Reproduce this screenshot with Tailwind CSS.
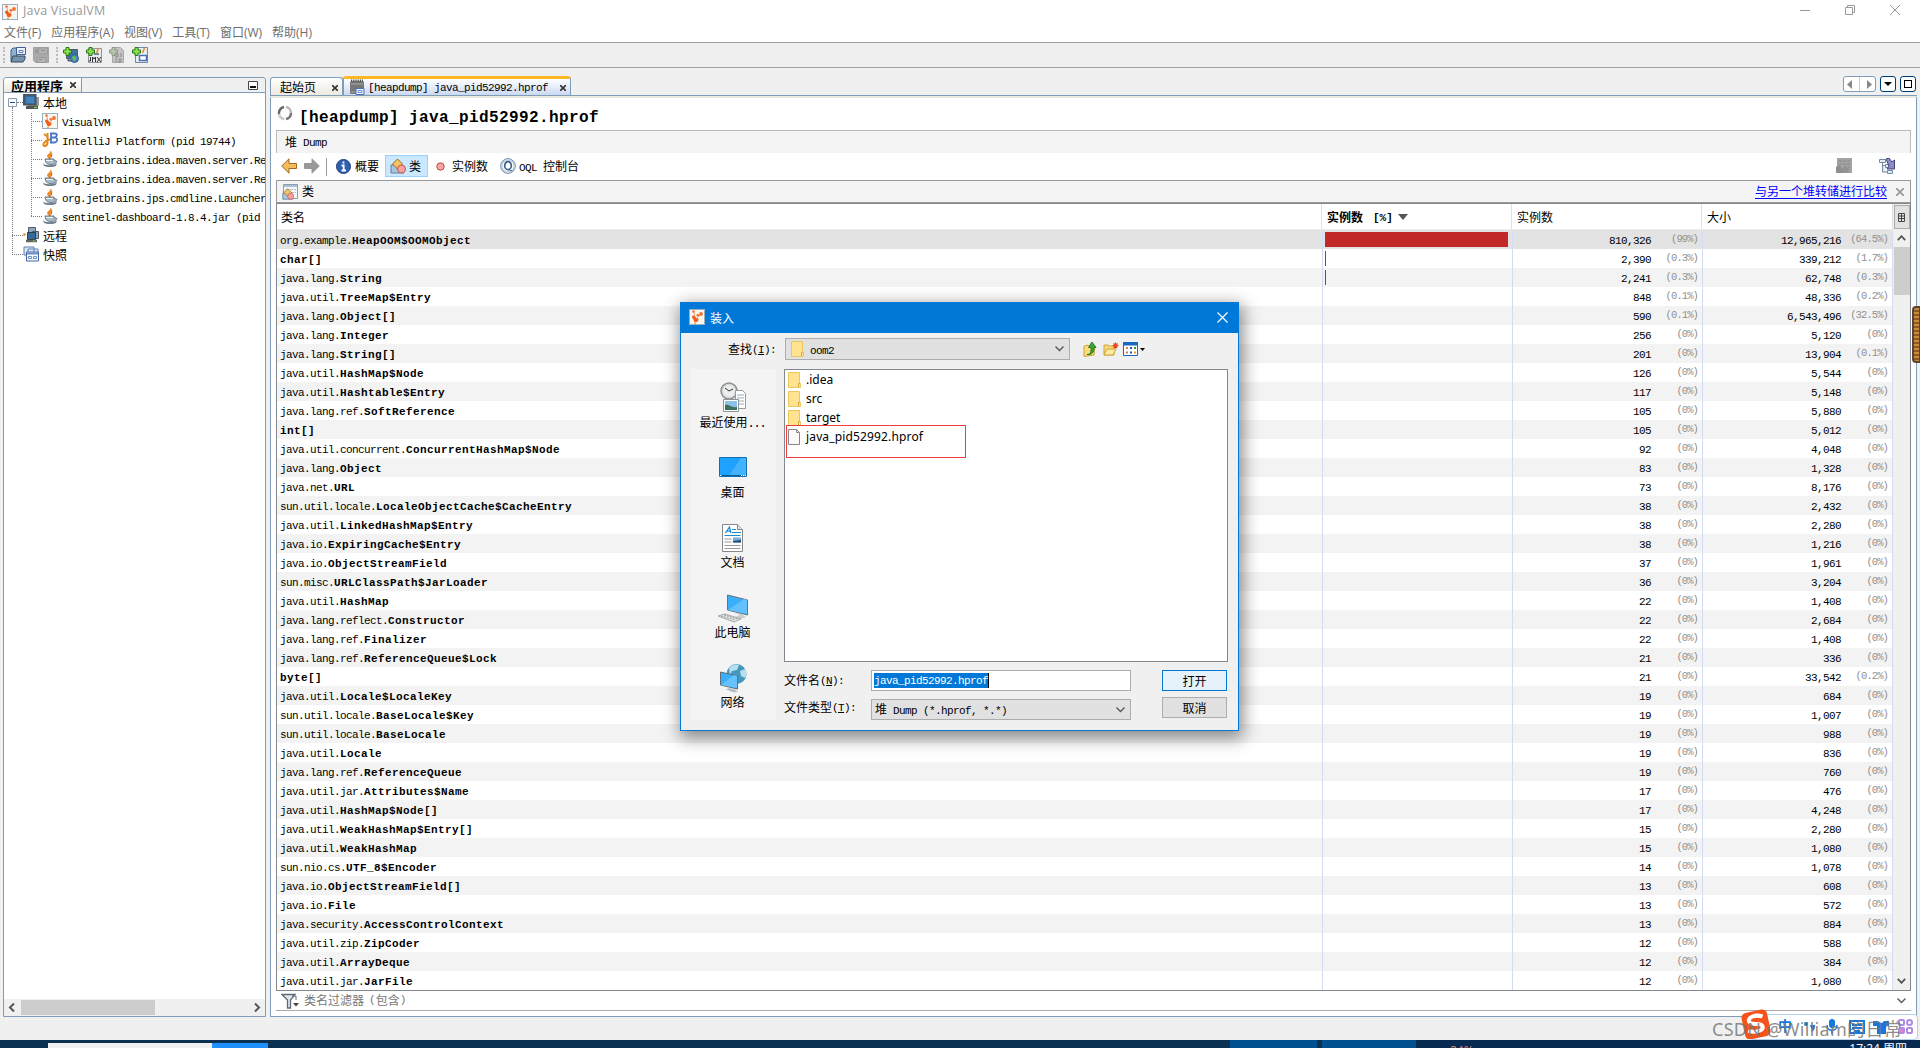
<!DOCTYPE html>
<html lang="zh-CN">
<head>
    <meta charset="UTF-8" />
    <title>Java VisualVM</title>
    <meta name="viewport" content="width=device-width, initial-scale=1" />
    <script src="https://cdn.jsdelivr.net/npm/@tailwindcss/browser@4"></script>
</head>
<body class="relative w-[1920px] h-[1048px] overflow-hidden bg-[#f0f0f0] flex flex-col text-black text-[12px] leading-none whitespace-nowrap font-['Liberation_Mono','Noto_Sans_CJK_SC',monospace]">

    <!-- shared icons -->
    <svg class="hidden">
        <symbol id="vm" viewBox="0 0 16 16">
            <rect x=".5" y=".5" width="15" height="15" fill="#f8f6f3" stroke="#9ab0c0"/>
            <path d="M5 3l.5 4M11 6L8 9" stroke="#f58a4a" stroke-width=".8"/>
            <circle cx="4.500" cy="2.500" r="1.300" fill="#f47a3a"/><circle cx="12" cy="5" r="1.900" fill="#f2702c"/><circle cx="8.800" cy="6.200" r="1.300" fill="#f2702c"/>
            <path d="M3.500 7c1-1 2.500 0 3.500 1.500s3 0 2.500 2.500c-.5 2.500-4 3-4.500 1-.3-2-1.200-2-1.700-3s-.3-1.500.2-2z" fill="#ee5f1c"/><circle cx="6" cy="14.300" r=".9" fill="#f58a4a"/>
        </symbol>
        <symbol id="java" viewBox="0 0 16 16">
            <path d="M8.500 0c1 2-3 3-3 5 0 1.500 1 2 2 3 0-2 3-3 2.500-5C9.800 1.800 9 1 8.500 0z" fill="#f08a24" stroke="#e07a1c" stroke-width=".6"/><path d="M7 8c2-1 3-2 2.500-4" stroke="#c8581c" fill="none"/>
            <path d="M1 12c1 3 12 3 14 0l-1 3c-3 1.500-9 1.500-12 0z" fill="#6e7f8c"/>
            <path d="M3 8h9v2c3-1 4 1 1 2.500-3 2-8 1-9-1z" fill="#a8bac6" stroke="#5d6f7c" stroke-width=".9"/><path d="M4 9.500h7" stroke="#eef3f6"/>
        </symbol>
        <symbol id="folder" viewBox="0 0 13 16">
            <path d="M.5.5h11v11h1v4H.5z" fill="#ffe391" stroke="#ecc759"/><path d="M10.500 15V11.500h1.500" fill="none" stroke="#d8ab33"/>
        </symbol>
        <symbol id="plus" viewBox="0 0 9 9"><path d="M3 .5h3V3h2.500v3H6v2.500H3V6H.5V3H3z" fill="#8be04c" stroke="#247a14"/></symbol>
        <symbol id="shapes" viewBox="0 0 16 16">
            <path d="M1 7h6l7 8H1z" fill="#a9c4de" stroke="#5f7f9d"/>
            <path d="M7.500 1l5 5-5 5-5-5z" fill="#f3c468" stroke="#9a6b1c"/>
            <circle cx="11.500" cy="11" r="4" fill="#f6a49c" stroke="#c25a52"/>
        </symbol>
    </svg>

    <!-- title bar -->
    <header class="h-[42px] bg-white flex justify-between shrink-0">
        <div class="font-['Open_Sans','Noto_Sans_CJK_SC',sans-serif]">
            <div class="flex items-center gap-[5px] pl-0.5 h-[23px] text-[#999]">
                <svg class="size-4"><use href="#vm"/></svg>
                <span class="text-[12.5px] tracking-[0.2px]">Java VisualVM</span>
            </div>
            <nav class="flex items-center gap-[10px] pl-1 h-5 text-[#6d6d6d]">
                <span>文件(F)</span><span>应用程序(A)</span><span>视图(V)</span><span>工具(T)</span><span>窗口(W)</span><span>帮助(H)</span>
            </nav>
        </div>
        <div class="flex gap-[35px] pr-[20px] pt-[5px]">
            <svg class="size-[10px]" fill="none" stroke="#999"><path d="M0 5.500h10"/></svg>
            <svg class="size-[10px]" fill="none" stroke="#999"><path d="M.5 2.500h7v7h-7zM2.500 2.500v-2h7v7h-2"/></svg>
            <svg class="size-[10px]" fill="none" stroke="#999"><path d="M0 0l10 10M10 0L0 10"/></svg>
        </div>
    </header>

    <!-- toolbar -->
    <div class="h-[26px] shrink-0 border-y border-[#a0a0a0] bg-[#efefef] flex items-center pl-[3px]">
        <div class="h-4 border-l-2 border-dotted border-[#bbb] mr-[5px]"></div>
        <svg class="size-4 mr-[7px]" viewBox="0 0 16 16"><path d="M1 3l2-2h4v13H1z" fill="#8fb1d2" stroke="#41607c"/><path d="M6.500.5h9v7h-9z" fill="#eaf2fb" stroke="#3e5f97"/><path d="M9 3.500h4v2H9z" fill="#fff" stroke="#5b7fc0"/><path d="M3 9h12v3l-2 3H1z" fill="#7593ad" stroke="#33485a"/></svg>
        <svg class="size-4 mr-[7px]" viewBox="0 0 16 16"><path d="M.5.5h15v15h-13l-2-2z" fill="#aaa" stroke="#a3a3a3"/><path d="M5.500 1h9v6h-9zM4 10.500h9v5H4z" fill="#b2b2b2" stroke="#999"/><path d="M2 3h3M2 5h3M8 3.500h4M6 12.500h3" stroke="#8c8c8c"/></svg>
        <div class="h-4 border-l-2 border-dotted border-[#bbb] mr-[5px]"></div>
        <svg class="size-4 mr-[7px]" viewBox="0 0 16 16"><path d="M3.500 2.500h11v9h-11zM5 12v2h6" fill="#3b73a5" stroke="#555c63"/><circle cx="11.500" cy="11.500" r="4" fill="#4b86bd" stroke="#2d5c86"/><path d="M9 10l3-1 1 3-2 2z" fill="#6cc24a"/><use href="#plus" width="9" height="9"/></svg>
        <svg class="size-4 mr-[7px]" viewBox="0 0 16 16"><path d="M2.500 1.500h13v14h-13z" fill="#e8eaec" stroke="#8c98a4"/><path d="M12 1c1 2-2 3-1 6" stroke="#f08a24" fill="none" stroke-width="1.500"/><path d="M8 7h5" stroke="#7089a0" stroke-width="2"/><path d="M4.500 10v4h-2M6.500 15v-5l1.500 2 1.500-2v5M11 10l4 5M15 10l-4 5" stroke="#333" fill="none"/><use href="#plus" width="9" height="9"/></svg>
        <svg class="size-4 mr-[7px]" viewBox="0 0 16 16"><path d="M3.500.5h8l3 3v12h-11z" fill="#c4c4c4" stroke="#a8a8a8"/><path d="M7 7h2v3H7zM12 6v4M7 11v4M10 12h2v3h-2z" stroke="#8a8a8a" fill="none"/><path d="M3 .5h3V3h2.500v3H6v2.500H3V6H.5V3H3z" fill="#b5c4ae" stroke="#8b9a84"/></svg>
        <svg class="size-4" viewBox="0 0 16 16"><path d="M3.500.5h12v15h-12z" fill="#e9eef6" stroke="#7288ab"/><path d="M12 1c1 2-2 3-1 5" stroke="#f08a24" fill="none" stroke-width="1.500"/><path d="M7.500 8.500h7v5h-7z" fill="#fff" stroke="#4a70b8" stroke-width="1.500"/><use href="#plus" width="9" height="9"/></svg>
    </div>

    <div class="flex h-[950px] shrink-0 pt-[8px] pl-[3px]">
        <!-- applications panel -->
        <aside class="w-[263px] mt-[1px] h-[940px] border border-[#7f9db9] rounded-t-[3px] bg-white flex flex-col">
            <div class="h-[15px] bg-[#f0f0f0] flex justify-between shrink-0 border-b border-[#7f9db9] rounded-t-[3px] overflow-hidden">
                <div class="w-[78px] h-[15px] border-r border-[#7f9db9] bg-gradient-to-b from-white to-[#ece9e0] flex justify-between overflow-hidden pl-[7px] pr-[5px]">
                    <b class="text-[13px] leading-[20px]">应用程序</b>
                    <svg class="size-[6px] mt-1" stroke="#333" stroke-width="1.600"><path d="M0 0l6 6M6 0L0 6"/></svg>
                </div>
                <svg class="w-[10px] h-[9px] mt-[3px] mr-[7px]"><path d="M.5.5h9v8h-9z" fill="#fff" stroke="#444"/><path d="M2 6h6" stroke="#111" stroke-width="2"/></svg>
            </div>
            <div class="relative flex-1 overflow-hidden">
                <div class="absolute left-[8px] top-[14px] h-[148px] border-l border-dotted border-[#777]"></div>
                <div class="absolute left-[27px] top-[20px] h-[103px] border-l border-dotted border-[#777]"></div>
                <div id="tree"></div>
            </div>
            <div class="h-[17px] bg-[#f0f0f0] flex items-center shrink-0">
                <svg class="w-[17px] h-[9px]" fill="none" stroke="#555" stroke-width="2"><path d="M10 .5l-4 4 4 4"/></svg>
                <div class="w-[134px] h-[15px] bg-[#cdcdcd]"></div>
                <div class="flex-1"></div>
                <svg class="w-[14px] h-[9px]" fill="none" stroke="#555" stroke-width="2"><path d="M4 .5l4 4-4 4"/></svg>
            </div>
        </aside>

        <!-- document area -->
        <main class="ml-1 w-[1647px] h-[941px] flex flex-col">
            <div class="h-[20px] flex items-end shrink-0 border-b border-[#7f9db9]">
                <div class="w-[73px] h-[18px] border border-b-0 border-[#7f9db9] rounded-t-[3px] bg-gradient-to-b from-white to-[#ece9e0] flex items-center justify-between pl-[9px] pr-[4px]">
                    <span class="pt-[4px]">起始页</span>
                    <svg class="size-[6px] mt-[2px]" stroke="#333" stroke-width="1.600"><path d="M0 0l6 6M6 0L0 6"/></svg>
                </div>
                <div class="w-[228px] h-[19px] border-x border-t-[3px] border-x-[#7f9db9] border-t-[#fcb826] rounded-t-[3px] bg-gradient-to-b from-white to-[#ccd9f3] flex items-center pl-[5px] pr-1">
                    <svg class="size-4" viewBox="0 0 16 16"><rect x="1" y="2" width="14" height="13" rx="1.500" fill="#777"/><path d="M2 1.500h12" stroke="#444" stroke-width="2" stroke-dasharray="1.200 1"/><path d="M2 5h12M2 13h5" stroke="#aaa"/><path d="M7 9.500h8v6H7z" fill="#f2f6fd" stroke="#4a70b8"/><path d="M9 11.500h4v2H9z" fill="#fff" stroke="#6e90cf"/></svg>
                    <span class="text-[11px] tracking-[-0.6px] ml-[3px] flex-1 pt-[3px]">[heapdump] java_pid52992.hprof</span>
                    <svg class="size-[6px] mt-[1px]" stroke="#333" stroke-width="1.600"><path d="M0 0l6 6M6 0L0 6"/></svg>
                </div>
                <div class="flex-1"></div>
                <div class="flex items-center pb-[3px] pr-px">
                    <div class="flex w-[33px] h-4 rounded-[3px] border border-[#7f9db9] bg-white items-center justify-around mr-1">
                        <svg class="w-[5px] h-[9px]" fill="#888"><path d="M5 0v9L0 4.500z"/></svg><div class="w-px h-full bg-[#ccc]"></div><svg class="w-[5px] h-[9px]" fill="#888"><path d="M0 0v9l5-4.500z"/></svg>
                    </div>
                    <div class="size-4 rounded-[3px] border border-[#003c74] bg-white flex items-center justify-center mr-1"><svg class="w-2 h-1"><path d="M0 0h8L4 4z"/></svg></div>
                    <div class="size-4 rounded-[3px] border border-[#003c74] bg-white flex items-center justify-center"><div class="size-2 border border-black"></div></div>
                </div>
            </div>
            <div class="flex-1 border border-t-2 border-[#7f9db9] border-t-[#ecebe0] bg-white pl-[5px] pr-[5px] flex flex-col min-h-0">
                <h1 class="flex items-center h-[32px] shrink-0 pl-[1px]">
                    <svg class="w-4 h-4 mb-0.5 mr-[6px]" fill="none" stroke-width="2.500"><path d="M9 2a6 6 0 0 1 5 6" stroke="#bbb"/><path d="M14 8a6 6 0 0 1-5 6" stroke="#777"/><path d="M7.500 14a6 6 0 0 1-5.500-5" stroke="#ccc"/><path d="M2 9a6 6 0 0 1 5-7" stroke="#666"/></svg>
                    <span class="text-[16px] tracking-[0.4px] font-bold pt-[8px]">[heapdump] java_pid52992.hprof</span>
                </h1>
                <div class="h-[23px] shrink-0 border border-b-0 border-[#bbb] bg-[#f4f4f4] flex items-center pl-2 pt-[3px] gap-[6px]"><span>堆</span><span class="text-[11px] tracking-[-0.6px]">Dump</span></div>
                <div class="h-[27px] shrink-0 flex items-center pl-[5px]">
                    <svg class="w-4 h-[16px] mr-[7px] mb-px" viewBox="0 0 16 16"><path d="M.7 8L8 .8v4.700h7.500v5H8v4.700z" fill="#f4bb5c" stroke="#a26a1d"/></svg>
                    <svg class="w-4 h-[16px] mb-px" viewBox="0 0 16 16"><path d="M15.300 8L8 .8v4.700H.5v5H8v4.700z" fill="#999" stroke="#999"/></svg>
                    <div class="w-px h-[18px] bg-[#999] mx-[6px]"></div>
                    <svg class="size-[15px] ml-[3px] mr-[4px] mb-px" viewBox="0 0 15 15"><circle cx="7.500" cy="7.500" r="7" fill="#2f5fb0" stroke="#1f3f7a"/><path d="M7.500 2.500v2M5.500 6.500h2.200V11M5.500 11.500h4.500" stroke="#fff" stroke-width="1.800" fill="none"/></svg>
                    <span class="pt-[3px]">概要</span>
                    <div class="w-[43px] h-[22px] border border-[#99d1ff] bg-[#cce8ff] flex items-center gap-[3px] pl-1 ml-[6px] mb-px"><svg class="size-4"><use href="#shapes"/></svg><span class="pt-[4px]">类</span></div>
                    <svg class="size-[9px] ml-[8px] mr-[7px] mb-px"><circle cx="4.500" cy="4.500" r="3.700" fill="#f4a8a0" stroke="#b8453d"/></svg>
                    <span class="pt-[3px]">实例数</span>
                    <svg class="size-4 ml-[12px] mr-[3px] mb-px" viewBox="0 0 16 16" fill="none"><circle cx="8" cy="8" r="7.300" stroke="#5f7d9e"/><circle cx="8" cy="8" r="6" stroke="#c3d3e4" stroke-width="1.500"/><ellipse cx="8" cy="7.700" rx="3.300" ry="4" stroke="#3f618c" stroke-width="1.700"/><path d="M8 11.500c2 0 2 2 4 1" stroke="#3f618c"/></svg>
                    <span class="text-[11px] tracking-[-0.6px] mr-[6px] pt-[3px]">OQL</span><span class="pt-[3px]">控制台</span>
                    <div class="flex-1"></div>
                    <svg class="size-4 mr-[27px] mb-px" viewBox="0 0 16 16"><path d="M1 0h15v15H1z" fill="#a3a3a3"/><path d="M3 3h11M3 6h11M8 9h6" stroke="#8a8a8a" stroke-dasharray="3 1"/><path d="M0 15V9l3-2 4 4v4z" fill="#8e8e8e"/><circle cx="10" cy="12" r="3" fill="#929292"/></svg>
                    <svg class="size-4 mr-4 mb-px" viewBox="0 0 16 16"><path d="M.5 1.500h6v3h-6zM3.500 5v9h5M3.500 7.500h3M6.500 6.500h4v3h-4zM8.500 12.500h5v3h-5z" fill="#e4ebf2" stroke="#7189a3"/><path d="M7 1l3-1 3 4 2.500-2v9H8l2-3z" fill="#8c8cc6" stroke="#44447e"/></svg>
                </div>
                <div class="h-[23px] shrink-0 border border-[#999] bg-[#f4f4f4] flex items-center pl-[5px]">
                    <svg class="size-4 mr-1" viewBox="0 0 16 16"><path d="M1.500.5h14v14h-14z" fill="#f4f7fa" stroke="#8c9eae"/><path d="M2 2h13" stroke="#a8bfd4" stroke-width="2"/><path d="M4 5.500h10M9 8.500h5" stroke="#b0b8c0" stroke-dasharray="3 1"/><g transform="translate(0 4) scale(.75)"><use href="#shapes" width="16" height="16"/></g></svg>
                    <span class="pt-[3px]">类</span>
                    <div class="flex-1"></div>
                    <span class="text-[#0000ff] underline underline-offset-2 pt-[2px]">与另一个堆转储进行比较</span>
                    <svg class="size-2 ml-[9px] mr-[6px]" stroke="#999" stroke-width="1.800"><path d="M0 0l8 8M8 0L0 8"/></svg>
                </div>

                <div class="h-[788px] shrink-0 border border-[#828790] flex">
                    <div class="w-[1616px] overflow-hidden">
                        <div class="h-[26px] flex items-center border-b border-[#ececec]">
                            <div class="w-[1045px] h-full flex items-center pl-1 pt-1 border-r border-[#e0e0e0]">类名</div>
                            <div class="w-[190px] h-full flex items-center pl-[5px] pt-1 font-bold border-r border-[#e0e0e0]"><span>实例数</span><span class="ml-[10px] text-[11px]">[%]</span><svg class="w-[10px] h-[6px] ml-[5px] mb-1" fill="#555"><path d="M0 0h10L5 6z"/></svg></div>
                            <div class="w-[190px] h-full flex items-center pl-[5px] pt-1 border-r border-[#e0e0e0]">实例数</div>
                            <div class="flex-1 h-full flex items-center pl-[5px] pt-1 border-r border-[#e0e0e0]">大小</div>
                        </div>
                        <div id="rows"></div>
                    </div>
                    <div class="flex-1 bg-[#f0f0f0] flex flex-col items-center">
                        <div class="w-4 h-6 mt-[1px] border border-[#aaa] bg-[#e1e1e1] flex items-center justify-center"><svg class="w-[7px] h-[9px]" fill="none" stroke="#444"><path d="M.5.5h6v8h-6zM.5 3h6M.5 5.500h6M3.500 0v9"/></svg></div>
                        <svg class="w-[9px] h-[6px] my-[6px]" fill="none" stroke="#555" stroke-width="1.800"><path d="M.8 5.200l3.700-4 3.700 4"/></svg>
                        <div class="w-4 h-12 bg-[#cdcdcd]"></div>
                        <div class="flex-1"></div>
                        <svg class="w-[9px] h-[6px] mb-[6px]" fill="none" stroke="#555" stroke-width="1.800"><path d="M.8.8l3.700 4 3.700-4"/></svg>
                    </div>
                </div>
                <div class="h-[20px] shrink-0 border-b border-[#aaa] flex items-center pl-[5px] pr-[5px] text-[#777]">
                    <svg class="w-[18px] h-4 mr-[5px]" viewBox="0 0 18 16"><path d="M1 1.500h13L9.500 7v8h-3V7z" fill="#dfe6ec" stroke="#5d6b78" stroke-width="1.300"/><path d="M11 3h4v4" stroke="#5d6b78" fill="none"/><path d="M12 10h6l-3 3.500z" fill="#444"/></svg>
                    <span class="pt-[2px]">类名过滤器</span><span class="ml-[5px] text-[11px]">(</span><span class="pt-[2px]">包含</span><span class="text-[11px]">)</span>
                    <div class="flex-1"></div>
                    <svg class="w-[9px] h-[6px]" fill="none" stroke="#555" stroke-width="1.300"><path d="M.5.5l4 4 4-4"/></svg>
                </div>
            </div>
        </main>
    </div>

    <!-- status bar, then the visible strip of the taskbar -->
    <div class="h-[22px] shrink-0"></div>
    <footer class="h-2 shrink-0 bg-[#0a3152] flex">
        <div class="w-[164px] ml-12 mt-[3px] bg-[#f0f0f0]"></div>
        <div class="w-[56px] mt-[3px] bg-[#1e90ff]"></div>
        <div class="w-[962px]"></div>
        <div class="w-[87px] bg-[#004f8f]"></div>
        <div class="w-[94px] ml-[5px] bg-[#00508f]"></div>
        <div class="flex-1 bg-[#062a50] flex overflow-hidden text-white">
            <span class="ml-[34px] pt-[5px] text-[#e88070] font-['Open_Sans',sans-serif]">24%</span>
            <span class="ml-auto mr-[13px] pt-[3px] font-['Open_Sans','Noto_Sans_CJK_SC',sans-serif]">17:24 周四</span>
        </div>
    </footer>

    <!-- edge handle -->
    <div class="absolute left-[1912px] top-[306px] w-[9px] h-[57px] rounded-l-[4px] border-2 border-[#5a4630] bg-[repeating-linear-gradient(#c98a3c_0_2px,#8a5a24_2px_4px)]"></div>

    <!-- input method bar and signature -->
    <div class="absolute left-[1748px] top-[1014px] w-[170px] h-[26px] rounded border border-[#b5d0ee] bg-white flex items-center text-[#1478dc] font-bold text-[14px]">
        <svg class="w-[30px] h-[30px] -ml-2 -mt-1.5 shrink-0" viewBox="0 0 30 30"><g transform="rotate(-12 15 15)"><rect x="2" y="2" width="26" height="27" rx="5" fill="#f4531c"/><path d="M23 9c-7-4-16-2-14 3 2 4 12 2 12 7 0 4-9 5-15 1" fill="none" stroke="#fff" stroke-width="4"/></g></svg>
        <span class="ml-[7px]">中</span>
        <svg class="w-3 h-3 ml-[12px]" fill="#1478dc"><circle cx="2" cy="3" r="2"/><path d="M6 4h5c0 4-1 6-4 7 1-2 1-3 0-4z"/></svg>
        <svg class="w-3 h-4 ml-[10px]" fill="#1478dc"><rect x="3" width="6" height="9" rx="3"/><path d="M1 6c0 7 10 7 10 0M6 11v4" fill="none" stroke="#1478dc" stroke-width="1.500"/></svg>
        <svg class="w-4 h-[14px] ml-[11px]" fill="none" stroke="#1478dc" stroke-width="2"><path d="M1 1h14v12H1zM3 5h10M3 8h10M5 11h6"/></svg>
        <svg class="w-[16px] h-[14px] ml-[8px]" fill="#1478dc"><path d="M0 1h5l2 2h2l2-2h5v5h-3v8H4V6H0z"/></svg>
        <svg class="w-[15px] h-4 ml-[9px]" viewBox="0 0 15 16" fill="none" stroke="#ad8be4" stroke-width="2"><rect x="1" y="1" width="5" height="5" rx="1"/><circle cx="11.500" cy="3.500" r="2.500"/><rect x="1" y="9" width="5" height="5" rx="1" fill="#d98bd0"/><rect x="9" y="9" width="5" height="5" rx="1"/></svg>
    </div>
    <div class="absolute left-[1712px] top-[1017px] w-[200px] text-[18px] leading-6 text-[#777]/85 font-['Noto_Sans','Noto_Sans_CJK_SC',sans-serif] tracking-[0.3px]">CSDN @William的日常</div>

    <!-- open dialog -->
    <section class="absolute left-[680px] top-[302px] w-[559px] h-[429px] border border-[#0078d7] bg-[#f0f0f0] shadow-[2px_5px_16px_2px_rgba(0,0,0,0.45)] flex flex-col">
        <div class="h-[30px] shrink-0 bg-[#0078d7] flex items-center pl-2 pr-[10px] text-white">
            <svg class="size-4 mr-[5px] mb-[2px]"><use href="#vm"/></svg>
            <span class="flex-1 font-['Noto_Sans_CJK_SC',sans-serif]">装入</span>
            <svg class="size-[11px] mb-[2px]" stroke="#fff" stroke-width="1.200"><path d="M.5.5l10 10M10.500.5l-10 10"/></svg>
        </div>
        <div class="flex items-center h-[22px] mt-[5px] shrink-0">
            <div class="w-[104px] pl-[47px] pt-[3px] flex items-center"><span>查找</span><span class="text-[11px] tracking-[-0.6px]">(<u>I</u>):</span></div>
            <div class="w-[285px] h-[22px] border border-[#adadad] bg-[#e1e1e1] flex items-center pl-[5px] pr-[5px]">
                <svg class="w-[13px] h-4 mr-[6px]"><use href="#folder"/></svg><span class="text-[11px] tracking-[-0.6px] flex-1 pt-[4px]">oom2</span>
                <svg class="w-[9px] h-[6px]" fill="none" stroke="#555" stroke-width="1.300"><path d="M.5.5l4 4 4-4"/></svg>
            </div>
            <svg class="w-[14px] h-4 ml-[13px]" viewBox="0 0 14 16"><path d="M1 5l4-1 1 1h6l-1 9-10 1.500z" fill="#f9dd7c" stroke="#d0a43b"/><path d="M4 13.500c4 0 4-3 4-7H5.500L9 1l4 5.500h-2c0 5-2 7.500-7 7z" fill="#35a83a" stroke="#186c1c" stroke-width=".8"/></svg>
            <svg class="w-[16px] h-[14px] ml-[6px]" viewBox="0 0 16 14"><path d="M1 3h4l1 1h5v9H1z" fill="#f7d873" stroke="#d0a43b"/><path d="M1 13l3-6h9l-3 6z" fill="#fdeba4" stroke="#d0a43b"/><path d="M12.500.5v6M9.500 3.500h6M10.500 1.500l4 4M14.500 1.500l-4 4" stroke="#e8481c" stroke-width="1.200"/></svg>
            <svg class="w-[15px] h-[14px] ml-[4px]" viewBox="0 0 15 14"><path d="M.5.5h14v13H.5z" fill="#fff" stroke="#1668c0"/><path d="M0 2h15" stroke="#1668c0" stroke-width="3"/><path d="M3 6h2M3 10.500h2" stroke="#e07848" stroke-width="2"/><path d="M7 6h2M7 10.500h2" stroke="#2858a8" stroke-width="2"/><path d="M11 6h2" stroke="#3a9a48" stroke-width="2"/><path d="M11 10.500h2" stroke="#e0a030" stroke-width="2"/></svg>
            <svg class="w-[5px] h-[3px] ml-[2px]"><path d="M0 0h5L2.500 3z"/></svg>
        </div>
        <div class="flex flex-1 mt-[9px]">
            <div class="w-[85px] h-[351px] ml-[10px] pr-[2px] bg-[#f4f4f4] pt-[8px] flex flex-col gap-[16px] text-center">
                <div class="h-[54px] flex flex-col items-center">
                    <svg class="w-8 h-9 shrink-0" viewBox="0 0 32 36"><circle cx="12" cy="14" r="8" fill="#d4d6d8" stroke="#8e9296" stroke-width="1.500"/><circle cx="12" cy="14" r="6" fill="#eceded"/><path d="M8 11l4 3 4-2" stroke="#333" fill="none"/><path d="M18.500 13.500h7l3 3v15h-10z" fill="#fff" stroke="#999"/><path d="M20 18h7M20 21h7M20 24h7M20 27h7" stroke="#9ab"/><path d="M6.500 22.500h15v12h-15z" fill="#fff" stroke="#8f9498"/><path d="M8 24h12v9H8z" fill="#8cc0ea"/><path d="M8 28c4-1 6 3 12 2v3H8z" fill="#3c6f5e"/></svg>
                    <span class="h-[18px] leading-[22px]">最近使用<span class="tracking-[-1.2px]">...</span></span>
                </div>
                <div class="h-[54px] flex flex-col items-center">
                    <svg class="w-8 h-9 shrink-0" viewBox="0 0 32 36"><path d="M2.500 10.500h27v19h-27z" fill="#1ea1ff" stroke="#0f6fb4"/><path d="M12 29L24 11h5v18z" fill="#44b3ff"/><path d="M3 28.500h26" stroke="#0a5c9e"/><path d="M3 28.500h1.500M24 28.500h5" stroke="#fff" stroke-dasharray="1.300 .7"/></svg>
                    <span class="h-[18px] leading-[22px]">桌面</span>
                </div>
                <div class="h-[54px] flex flex-col items-center">
                    <svg class="w-8 h-9 shrink-0" viewBox="0 0 32 36"><path d="M5.500 7.500h15l5 5v22h-20z" fill="#fff" stroke="#888"/><path d="M20.500 7.500v5h5" fill="#ddd" stroke="#888"/><path d="M8.500 16l4-6 1.500 6M10 14.200h4" stroke="#1d8ad0" stroke-width="1.300" fill="none"/><path d="M15 12.500h4M15 15.500h9M7.500 18.500h16" stroke="#1d8ad0"/><path d="M7.500 22h7M7.500 25h7M7.500 28.500h16M7.500 31.500h16" stroke="#999"/><path d="M16 20.500h8v5h-8z" fill="#6faede"/><path d="M16 24l8-1v2.500h-8z" fill="#27476c"/></svg>
                    <span class="h-[18px] leading-[22px]">文档</span>
                </div>
                <div class="h-[54px] flex flex-col items-center">
                    <svg class="w-8 h-9 shrink-0" viewBox="0 0 32 36"><path d="M10.500 8l20 5v15l-20-5z" fill="#39aefb" stroke="#68737c"/><path d="M11 23l16-11 3 1v14z" fill="#63c1ff"/><path d="M17 26l6 2-5 2 6 2 5-2-5-3z" fill="#c9ced2"/><path d="M1 29l7-2 16 5-7 3z" fill="#e6e8ea" stroke="#a5aaae"/><path d="M4 29l14 4M7 28l14 4" stroke="#999" stroke-dasharray="2 1"/></svg>
                    <span class="h-[18px] leading-[22px]">此电脑</span>
                </div>
                <div class="h-[54px] flex flex-col items-center">
                    <svg class="w-8 h-9 shrink-0" viewBox="0 0 32 36"><circle cx="19.500" cy="17" r="10" fill="#4497bd"/><path d="M12 11c3-4 8-4 10-3l-2 5-5 1-2 4zM23 14l5-2c2 3 1 8 0 9l-4-2z" fill="#b9dfef"/><path d="M3.500 15l17 4v13l-17-4z" fill="#39aefb" stroke="#5f6f7a"/><path d="M4 28l13-10 3 1v12z" fill="#66c3ff"/><path d="M12 31l6 1.500 3 2-4 1-8-3z" fill="#b9bfc4"/></svg>
                    <span class="h-[18px] leading-[22px]">网络</span>
                </div>
            </div>
            <div class="ml-[8px] w-[444px]">
                <div class="h-[293px] border border-[#828790] bg-white relative text-[12px] font-['Noto_Sans',sans-serif]">
                    <div class="flex items-center h-[19px] pl-[3px] gap-[5px]"><svg class="w-[13px] h-4"><use href="#folder"/></svg><span>.idea</span></div>
                    <div class="flex items-center h-[19px] pl-[3px] gap-[5px]"><svg class="w-[13px] h-4"><use href="#folder"/></svg><span>src</span></div>
                    <div class="flex items-center h-[19px] pl-[3px] gap-[5px]"><svg class="w-[13px] h-4"><use href="#folder"/></svg><span>target</span></div>
                    <div class="flex items-center h-[19px] pl-[3px] gap-[5px]"><svg class="w-[13px] h-4" viewBox="0 0 13 16"><path d="M.5.5h8l3 3v12H.5z" fill="#fafafa" stroke="#888"/><path d="M8.500.5v3h3" fill="none" stroke="#888"/></svg><span class="tracking-[0.15px]">java_pid52992.hprof</span></div>
                    <div class="absolute left-[1px] top-[55px] w-[180px] h-[33px] border border-[#f03c3c]"></div>
                </div>
                <div class="flex mt-2">
                    <div class="w-[87px] flex flex-col">
                        <div class="flex items-center h-[21px] pt-[2px]"><span>文件名</span><span class="text-[11px] tracking-[-0.6px]">(<u>N</u>):</span></div>
                        <div class="flex items-center h-[21px] mt-[6px] pt-[2px]"><span>文件类型</span><span class="text-[11px] tracking-[-0.6px]">(<u>T</u>):</span></div>
                    </div>
                    <div class="w-[260px] flex flex-col">
                        <div class="h-[21px] border border-[#abadb3] bg-white flex items-center pl-[2px]"><span class="h-[15px] leading-[17px] bg-[#0078d7] text-white border-r border-black text-[11px] tracking-[-0.6px]">java_pid52992.hprof</span></div>
                        <div class="h-[21px] mt-2 border border-[#adadad] bg-[#e1e1e1] flex items-center pl-[3px] pr-[5px]"><span class="pt-[3px]">堆</span><span class="ml-[6px] text-[11px] tracking-[-0.6px] flex-1 pt-[3px]">Dump (*.hprof, *.*)</span><svg class="w-[9px] h-[6px]" fill="none" stroke="#555" stroke-width="1.300"><path d="M.5.5l4 4 4-4"/></svg></div>
                    </div>
                    <div class="w-[65px] ml-[31px] flex flex-col gap-[6px]">
                        <div class="h-[21px] border border-[#0078d7] bg-[#e5f1fb] flex items-center justify-center pt-[4px]">打开</div>
                        <div class="h-[21px] border border-[#adadad] bg-[#e1e1e1] flex items-center justify-center pt-[4px]">取消</div>
                    </div>
                </div>
            </div>
        </div>
    </section>

    <script>
        // package, class, instances, instances %, size, size %
        const classes = [
            ['org.example.', 'HeapOOM$OOMObject', '810,326', '99%', '12,965,216', '64.5%'],
            ['', 'char[]', '2,390', '0.3%', '339,212', '1.7%'],
            ['java.lang.', 'String', '2,241', '0.3%', '62,748', '0.3%'],
            ['java.util.', 'TreeMap$Entry', '848', '0.1%', '48,336', '0.2%'],
            ['java.lang.', 'Object[]', '590', '0.1%', '6,543,496', '32.5%'],
            ['java.lang.', 'Integer', '256', '0%', '5,120', '0%'],
            ['java.lang.', 'String[]', '201', '0%', '13,904', '0.1%'],
            ['java.util.', 'HashMap$Node', '126', '0%', '5,544', '0%'],
            ['java.util.', 'Hashtable$Entry', '117', '0%', '5,148', '0%'],
            ['java.lang.ref.', 'SoftReference', '105', '0%', '5,880', '0%'],
            ['', 'int[]', '105', '0%', '5,012', '0%'],
            ['java.util.concurrent.', 'ConcurrentHashMap$Node', '92', '0%', '4,048', '0%'],
            ['java.lang.', 'Object', '83', '0%', '1,328', '0%'],
            ['java.net.', 'URL', '73', '0%', '8,176', '0%'],
            ['sun.util.locale.', 'LocaleObjectCache$CacheEntry', '38', '0%', '2,432', '0%'],
            ['java.util.', 'LinkedHashMap$Entry', '38', '0%', '2,280', '0%'],
            ['java.io.', 'ExpiringCache$Entry', '38', '0%', '1,216', '0%'],
            ['java.io.', 'ObjectStreamField', '37', '0%', '1,961', '0%'],
            ['sun.misc.', 'URLClassPath$JarLoader', '36', '0%', '3,204', '0%'],
            ['java.util.', 'HashMap', '22', '0%', '1,408', '0%'],
            ['java.lang.reflect.', 'Constructor', '22', '0%', '2,684', '0%'],
            ['java.lang.ref.', 'Finalizer', '22', '0%', '1,408', '0%'],
            ['java.lang.ref.', 'ReferenceQueue$Lock', '21', '0%', '336', '0%'],
            ['', 'byte[]', '21', '0%', '33,542', '0.2%'],
            ['java.util.', 'Locale$LocaleKey', '19', '0%', '684', '0%'],
            ['sun.util.locale.', 'BaseLocale$Key', '19', '0%', '1,007', '0%'],
            ['sun.util.locale.', 'BaseLocale', '19', '0%', '988', '0%'],
            ['java.util.', 'Locale', '19', '0%', '836', '0%'],
            ['java.lang.ref.', 'ReferenceQueue', '19', '0%', '760', '0%'],
            ['java.util.jar.', 'Attributes$Name', '17', '0%', '476', '0%'],
            ['java.util.', 'HashMap$Node[]', '17', '0%', '4,248', '0%'],
            ['java.util.', 'WeakHashMap$Entry[]', '15', '0%', '2,280', '0%'],
            ['java.util.', 'WeakHashMap', '15', '0%', '1,080', '0%'],
            ['sun.nio.cs.', 'UTF_8$Encoder', '14', '0%', '1,078', '0%'],
            ['java.io.', 'ObjectStreamField[]', '13', '0%', '608', '0%'],
            ['java.io.', 'File', '13', '0%', '572', '0%'],
            ['java.security.', 'AccessControlContext', '13', '0%', '884', '0%'],
            ['java.util.zip.', 'ZipCoder', '12', '0%', '588', '0%'],
            ['java.util.', 'ArrayDeque', '12', '0%', '384', '0%'],
            ['java.util.jar.', 'JarFile', '12', '0%', '1,080', '0%'],
        ];
        const bars = [183, 1, 1];
        const cell = (value, pct) => `
            <div class="w-[190px] h-full border-r border-[#d2dcf5] flex items-center justify-end pr-1">
                <span class="pt-[4px]">${value}</span><span class="w-[47px] text-right text-[10.500px] tracking-[-0.9px] text-[#909090]">(${pct})</span>
            </div>`;
        document.getElementById('rows').innerHTML = classes.map((c, i) => `
            <div class="flex h-[19px] items-center text-[11px] tracking-[-0.6px] ${i === 0 ? 'bg-[#e3e3e3]' : i % 2 ? 'bg-white' : 'bg-[#f3f3f3]'}">
                <div class="w-[1046px] h-full pl-[3px] pt-[6px] border-r border-[#d2dcf5]">${c[0]}<b class="tracking-[0.4px]">${c[1]}</b></div>
                <div class="w-[190px] h-full border-r border-[#d2dcf5] pl-[2px] pt-[2px]">${bars[i] ? `<div class="h-[15px] bg-[#c32829]" style="width:${bars[i]}px"></div>` : ''}</div>
                ${cell(c[2], c[3])}${cell(c[4], c[5])}
            </div>`).join('');

        const icons = {
            local: '<path d="M5 3h11v9H5z" fill="#9a9a9a"/><path d="M.8.800h12v10H.8z" fill="#34699a" stroke="#4c5258" stroke-width="1.500"/><path d="M3 3h8v6H3z" fill="#4585bd"/><path d="M3 13.500h12" stroke="#555" stroke-width="3"/><path d="M11 13.500h3" stroke="#7be04c"/>',
            vm: '<use href="#vm"/>',
            idea: '<path d="M5.500 1v9c0 5-5 5-4 2s4-4 8-5" fill="none" stroke="#e08a1c" stroke-width="2"/><path d="M9 1v10M8 1.500h5c3 0 2 4-1 4h-3 4c3 0 3 5-1 5H8" fill="none" stroke="#4a78c4" stroke-width="1.800"/><path d="M2 2l4 3" stroke="#e08a1c" stroke-width="2"/>',
            java: '<use href="#java"/>',
            remote: '<path d="M5.500.5h7v6h-7zM9.500 4.500h6v7h-6z" fill="#8ba6bf" stroke="#505a64"/><path d="M4.500 5.500h8v7h-8z" fill="#34699a" stroke="#333a40"/><path d="M3 14h11" stroke="#666" stroke-width="2.500"/><path d="M10 14h2" stroke="#7be04c"/><circle cx="1.500" cy="7.500" r="1.300" fill="#e0922c"/>',
            snapshot: '<path d="M1 1h10v8H1zM5 3h10v8H5z" fill="#dce8f6" stroke="#5f7fb5"/><path d="M3.500 6h12v9h-12z" fill="#f4f8fd" stroke="#4766a4"/><path d="M4 7.500h11" stroke="#6e90c8" stroke-width="2"/><path d="M5.500 10.500h3v2h-3zM10.500 10.500h3v2h-3z" fill="#fff" stroke="#6e90c8"/>',
        };
        const nodes = [
            [0, 'local', '本地'], [1, 'vm', 'VisualVM'], [1, 'idea', 'IntelliJ Platform (pid 19744)'],
            [1, 'java', 'org.jetbrains.idea.maven.server.Re'], [1, 'java', 'org.jetbrains.idea.maven.server.Re'],
            [1, 'java', 'org.jetbrains.jps.cmdline.Launcher'], [1, 'java', 'sentinel-dashboard-1.8.4.jar (pid'],
            [0, 'remote', '远程'], [0, 'snapshot', '快照'],
        ];
        document.getElementById('tree').innerHTML = nodes.map(([level, icon, label], i) => `
            <div class="flex items-center h-[19px] ${level ? 'pl-[27px]' : i ? 'pl-[8px]' : 'pl-[4px]'}">
                ${i ? '' : '<svg class="size-[9px] shrink-0 relative"><path d="M.5.5h8v8h-8z" fill="#fff" stroke="#8c9cb0"/><path d="M2 4.500h5" stroke="#2b4c9b"/></svg>'}
                <div class="${i ? 'w-[11px]' : 'w-[6px]'} shrink-0 border-t border-dotted border-[#777]"></div>
                <svg class="size-4 shrink-0 mr-[4px] mb-px" viewBox="0 0 16 16">${icons[icon]}</svg>
                <span class="${level ? 'text-[11px] tracking-[-0.6px] pt-[4px]' : 'pt-[4px]'}">${label}</span>
            </div>`).join('');
    </script>
</body>
</html>
